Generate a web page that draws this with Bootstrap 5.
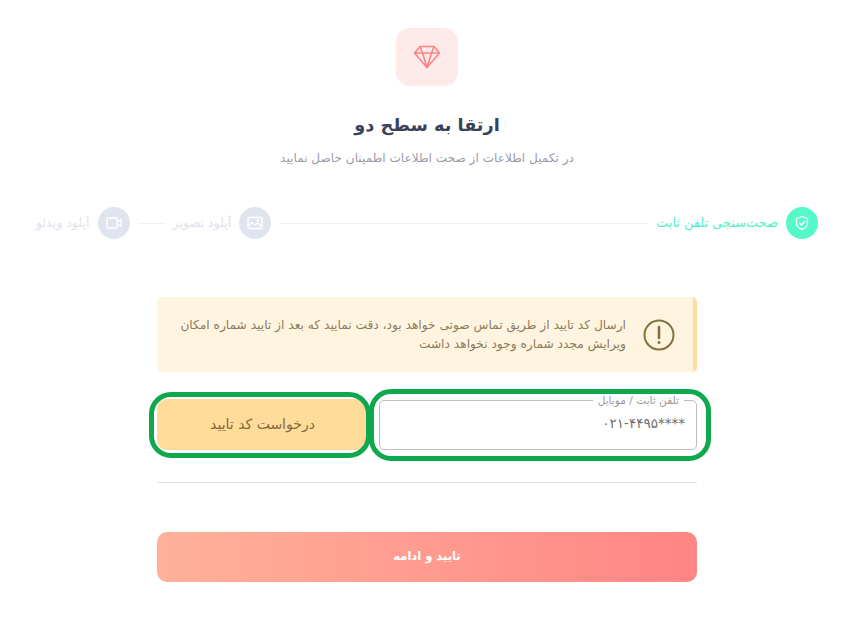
<!DOCTYPE html>
<html lang="fa" dir="rtl">
<head>
    <meta charset="UTF-8">
    <meta name="viewport" content="width=device-width, initial-scale=1.0">
    <title>ارتقا به سطح دو</title>
    <link href="https://cdn.jsdelivr.net/npm/bootstrap@5.3.2/dist/css/bootstrap.min.css" rel="stylesheet">
    <style>
        body { font-family: "DejaVu Sans", "Noto Sans", sans-serif; background: #fff; overflow: hidden; }
        .page-top { padding-top: 28px; }
        .gem-box { width: 62px; height: 58px; background: #ffeaea; border-radius: 14px; }
        .page-title { font-size: 17.7px; font-weight: 700; color: #3a4259; margin: 24px 0 0; line-height: 30px; }
        .page-sub { font-size: 12.1px; color: #9a9ca8; margin: 9px 0 0; line-height: 18px; }
        .stepper { margin-top: 40px; padding: 0 36px; height: 32px; }
        .step-circle { width: 32px; height: 32px; background: #dfe4ef; flex-shrink: 0; }
        .step-text { font-size: 12.6px; color: #dfe2ea; white-space: nowrap; margin-right: 8px; }
        .step-on .step-circle { background: #55f9c9; }
        .step-on .step-text { color: #55f0c4; font-size: 12.9px; }
        .step-line { height: 1px; background: #f0f1f4; }
        .step-line-long { flex: 1; margin: 0 8px; }
        .step-line-short { width: 27px; margin: 0 8px; }
        .form-area { width: 540px; margin: 58px auto 0; }
        .notice { height: 75px; background: #fff4e0; border-right: 4px solid #ffdd9f; border-radius: 5px; padding: 0 18px 0 0; color: #8c7b5c; font-size: 12.2px; line-height: 19px; }
        .notice p { margin: 0 17px 0 0; width: 448px; }
        .notice svg { flex-shrink: 0; }
        .verify-row { margin-top: 22px; height: 59px; }
        .phone-field { width: 318px; height: 56px; margin: 0; padding: 0 11px; border: 1px solid #bdbdbd; border-radius: 5px; flex-shrink: 0; }
        .phone-field legend { float: none; width: auto; font-size: 10.6px; line-height: 13px; color: #9b9b9b; padding: 0 5px; margin: 0 1px 0 0; }
        .phone-field input { border: 0; outline: 0; width: 100%; font-size: 13.5px; color: #6f6f6f; padding: 0; margin-top: 4px; height: 24px; background: transparent; font-family: inherit; }
        .ring-box { position: absolute; border: 5.5px solid #0fa84c; border-radius: 22px; pointer-events: none; }
        .ring-phone { top: 389px; left: 369px; width: 342px; height: 72px; }
        .ring-code { top: 392px; left: 149px; width: 222px; height: 66px; }
        .code-btn { width: 211px; height: 51px; margin-top: 5px; background: #ffdc9a; color: #85693a; font-size: 14px; border: 0; border-radius: 10px; }
        .form-rule { margin: 29px 0 49px; border: 0; border-top: 1px solid #e3e3e3; opacity: 1; }
        .go-btn { width: 100%; height: 50px; border: 0; border-radius: 10px; color: #fff; font-size: 11.5px; font-weight: 700; background: linear-gradient(to left, #ff8585, #ffb199); }
    </style>
</head>
<body>
    <div class="page-top text-center">
        <div class="gem-box d-flex align-items-center justify-content-center mx-auto">
            <svg width="28" height="24" viewBox="0 0 28 24" fill="none" stroke="#fb8585" stroke-width="1.6" stroke-linejoin="round">
                <path d="M7 1.5h14l5.5 6.5L14 22.5 1.5 8z"/>
                <path d="M1.5 8h25M9.5 8L14 22.5 18.5 8M7 1.5L9.5 8M21 1.5L18.5 8"/>
            </svg>
        </div>
        <h1 class="page-title">ارتقا به سطح دو</h1>
        <p class="page-sub">در تکمیل اطلاعات از صحت اطلاعات اطمینان حاصل نمایید</p>
    </div>

    <div class="stepper d-flex align-items-center">
        <div class="step-on d-flex align-items-center">
            <span class="step-circle rounded-circle d-flex align-items-center justify-content-center">
                <svg width="16" height="16" viewBox="0 0 16 16" fill="none" stroke="#fff" stroke-width="1.3" stroke-linecap="round" stroke-linejoin="round">
                    <path d="M8 1.5l5.5 2v4.2c0 3.2-2.3 5.6-5.5 6.8-3.2-1.2-5.5-3.6-5.5-6.8V3.5z"/>
                    <path d="M5.5 8l2 2 3.2-3.5"/>
                </svg>
            </span>
            <span class="step-text">صحت‌سنجی تلفن ثابت</span>
        </div>
        <div class="step-line step-line-long"></div>
        <div class="d-flex align-items-center">
            <span class="step-circle rounded-circle d-flex align-items-center justify-content-center">
                <svg width="16" height="14" viewBox="0 0 16 14" fill="none" stroke="#fff" stroke-width="1.3" stroke-linejoin="round">
                    <rect x="1" y="1.5" width="14" height="11" rx="1"/>
                    <path d="M1.5 10l3.5-3.5 3 2.5 2.5-2 4 3.5"/>
                    <circle cx="11" cy="4.5" r=".8" fill="#fff"/>
                </svg>
            </span>
            <span class="step-text">آپلود تصویر</span>
        </div>
        <div class="step-line step-line-short"></div>
        <div class="d-flex align-items-center">
            <span class="step-circle rounded-circle d-flex align-items-center justify-content-center">
                <svg width="16" height="14" viewBox="0 0 16 14" fill="none" stroke="#fff" stroke-width="1.3" stroke-linejoin="round">
                    <rect x="1" y="2" width="10" height="10" rx="1"/>
                    <path d="M11 6l4-2.5v7L11 8"/>
                </svg>
            </span>
            <span class="step-text">آپلود ویدئو</span>
        </div>
    </div>

    <div class="form-area">
        <div class="notice d-flex align-items-center">
            <svg width="32" height="32" viewBox="0 0 32 32" fill="none" stroke="#85703f" stroke-width="2">
                <circle cx="16" cy="16" r="14.5"/>
                <path d="M16 8v11" stroke-width="2.6" stroke-linecap="round"/>
                <circle cx="16" cy="23.5" r="1.5" fill="#85703f" stroke="none"/>
            </svg>
            <p>ارسال کد تایید از طریق تماس صوتی خواهد بود، دقت نمایید که بعد از تایید شماره امکان ویرایش مجدد شماره وجود نخواهد داشت</p>
        </div>

        <div class="verify-row d-flex justify-content-between align-items-start">
            <fieldset class="phone-field">
                <legend>تلفن ثابت / موبایل</legend>
                <input type="text" dir="ltr" class="text-end" value="۰۲۱-۴۴۹۵****" aria-label="تلفن">
            </fieldset>
            <button type="button" class="code-btn">درخواست کد تایید</button>
        </div>

        <hr class="form-rule">

        <button type="button" class="go-btn d-block">تایید و ادامه</button>
    </div>

    <!-- green highlight rings sit on top of the form -->
    <div class="ring-box ring-phone"></div>
    <div class="ring-box ring-code"></div>
    <script src="https://cdn.jsdelivr.net/npm/bootstrap@5.3.2/dist/js/bootstrap.bundle.min.js"></script>
</body>
</html>
